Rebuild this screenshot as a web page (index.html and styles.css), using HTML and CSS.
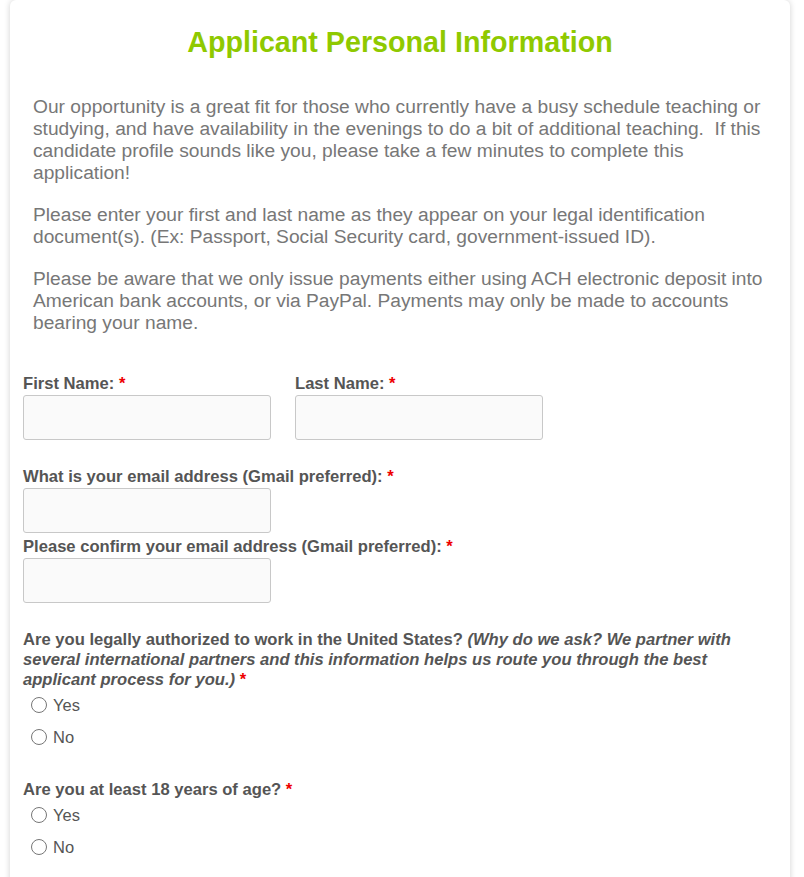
FILE: index.html
```html
<!DOCTYPE html>
<html lang="en">
<head>
  <meta charset="UTF-8">
  <meta name="viewport" content="width=device-width, initial-scale=1.0">
  <title>Applicant Personal Information</title>
  <link rel="stylesheet" href="styles.css">
</head>
<body>
  <div class="form-card">
    <h1 class="form-title">Applicant Personal Information</h1>

    <div class="intro">
      <p>Our opportunity is a great fit for those who currently have a busy schedule teaching or studying, and have availability in the evenings to do a bit of additional teaching.&nbsp; If this candidate profile sounds like you, please take a few minutes to complete this application!</p>
      <p>Please enter your first and last name as they appear on your legal identification document(s). (Ex: Passport, Social Security card, government-issued ID).</p>
      <p>Please be aware that we only issue payments either using ACH electronic deposit into American bank accounts, or via PayPal. Payments may only be made to accounts bearing your name.</p>
    </div>

    <div class="field-row">
      <div class="field">
        <label class="field-label" for="firstName">First Name: <span class="req">*</span></label>
        <input type="text" id="firstName" class="text-input">
      </div>
      <div class="field">
        <label class="field-label" for="lastName">Last Name: <span class="req">*</span></label>
        <input type="text" id="lastName" class="text-input">
      </div>
    </div>

    <div class="field field-email">
      <label class="field-label" for="email">What is your email address (Gmail preferred): <span class="req">*</span></label>
      <input type="text" id="email" class="text-input">
    </div>
    <div class="field field-confirm">
      <label class="field-label" for="emailConfirm">Please confirm your email address (Gmail preferred): <span class="req">*</span></label>
      <input type="text" id="emailConfirm" class="text-input">
    </div>

    <div class="question">
      <div class="field-label">Are you legally authorized to work in the United States? <em>(Why do we ask? We partner with several international partners and this information helps us route you through the best applicant process for you.)</em> <span class="req">*</span></div>
      <label class="radio"><input type="radio" name="authorized"> Yes</label>
      <label class="radio"><input type="radio" name="authorized"> No</label>
    </div>

    <div class="question">
      <div class="field-label">Are you at least 18 years of age? <span class="req">*</span></div>
      <label class="radio"><input type="radio" name="adult"> Yes</label>
      <label class="radio"><input type="radio" name="adult"> No</label>
    </div>
  </div>
</body>
</html>
```

FILE: styles.css
```css
body {
  font-family: "Liberation Sans", Arial, sans-serif;
  margin: 0;
  padding: 0 14px 40px 10px;
  background-color: #fff;
}

.form-card {
  background-color: #fff;
  border-radius: 6px;
  box-shadow: 0 0 6px rgba(0, 0, 0, 0.18);
  padding: 26px 13px 40px;
}

.form-title {
  margin: 0 0 38px;
  text-align: center;
  font-size: 28.7px;
  font-weight: bold;
  color: #8fc900;
  line-height: 32px;
}

.intro {
  padding: 0 10px;
  margin-bottom: 39px;
}

.intro p {
  margin: 0 0 20px;
  font-size: 19.2px;
  line-height: 22px;
  color: #777;
}

.intro p:last-child {
  margin-bottom: 0;
}

.field-row {
  display: flex;
  gap: 24px;
}

.field {
  display: flex;
  flex-direction: column;
  align-items: flex-start;
}

.field-label {
  font-size: 16.6px;
  font-weight: bold;
  line-height: 20px;
  color: #555;
  padding-top: 1px;
  margin-bottom: 1px;
}

.field-label em {
  font-weight: bold;
}

.req {
  color: #e00;
}

.text-input {
  box-sizing: border-box;
  width: 248px;
  height: 45px;
  margin: 0;
  background-color: #fafafa;
  border: 1px solid #c8c8c8;
  border-radius: 3px;
  outline: none;
}

.field-email {
  margin-top: 26px;
}

.field-confirm {
  margin-top: 3px;
}

.question {
  margin-top: 26px;
}

.question .field-label {
  margin-bottom: -1px;
}

.radio {
  display: flex;
  align-items: center;
  gap: 6px;
  height: 32px;
  padding-left: 8px;
  font-size: 16.5px;
  color: #555;
}

.radio input {
  width: 16px;
  height: 16px;
  margin: 0;
}
```
